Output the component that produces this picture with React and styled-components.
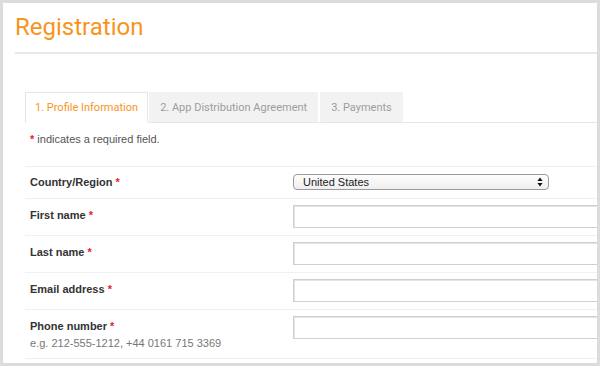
import React from 'react';
import styled, { createGlobalStyle } from 'styled-components';

const Global = createGlobalStyle`
  body {
    margin: 0;
    background: #dcdcdc;
  }
`;

const Frame = styled.div`
  box-sizing: border-box;
  width: 600px;
  height: 366px;
  padding: 3px;
`;

const Panel = styled.div`
  box-sizing: border-box;
  height: 360px;
  background: #ffffff;
  padding: 9px 0 0 12px;
  overflow: hidden;
`;

const Title = styled.h1`
  margin: 0;
  font-family: 'Roboto', sans-serif;
  font-weight: 400;
  font-size: 24px;
  line-height: 30px;
  color: #f7941d;
`;

const Rule = styled.div`
  margin-top: 10px;
  height: 2px;
  background: #e8e8e8;
`;

const Content = styled.div`
  padding-left: 10px;
`;

const TabBar = styled.div`
  display: flex;
  margin-top: 38px;
  border-bottom: 1px solid #e6e6e6;
`;

const Tab = styled.div`
  box-sizing: border-box;
  height: 31px;
  margin-bottom: -1px;
  margin-right: ${p => (p.$active ? '1px' : '2px')};
  padding: 0 ${p => (p.$active ? '9px' : '10px')};
  display: flex;
  align-items: center;
  font-family: 'Roboto', sans-serif;
  font-size: 11px;
  color: ${p => (p.$active ? '#f7941d' : '#9d9d9d')};
  background: ${p => (p.$active ? '#ffffff' : '#f2f2f2')};
  border: 1px solid ${p => (p.$active ? '#e6e6e6' : '#f2f2f2')};
  border-bottom-color: ${p => (p.$active ? '#ffffff' : '#e6e6e6')};
`;

const Note = styled.p`
  margin: 8px 0 19px 5px;
  font-family: 'Liberation Sans', Arial, sans-serif;
  font-size: 11px;
  line-height: 16px;
  color: #555;
`;

const Star = styled.span`
  color: #e8202a;
  font-weight: bold;
`;

const Row = styled.div`
  display: grid;
  grid-template-columns: 263px 1fr;
  padding: ${p => (p.$compact ? '7px 0 8px 5px' : '6px 0 7px 5px')};
  border-top: 1px solid #f0f0f0;
  &:last-child {
    border-bottom: 1px solid #f0f0f0;
    padding-bottom: 7px;
  }
`;

const LabelCell = styled.div`
  font-family: 'Liberation Sans', Arial, sans-serif;
`;

const Label = styled.div`
  font-size: 11px;
  font-weight: bold;
  line-height: ${p => (p.$compact ? '16px' : '20px')};
  color: #333;
`;

const Hint = styled.div`
  font-size: 11px;
  line-height: 15px;
  color: #777;
`;

const Input = styled.div`
  box-sizing: border-box;
  width: 340px;
  height: 23px;
  border: 1px solid #cfcfcf;
  box-shadow: inset 1px 1px 0 #e4e4e4;
  background: #fff;
`;

const Select = styled.div`
  box-sizing: border-box;
  width: 256px;
  height: 16px;
  display: flex;
  align-items: center;
  justify-content: space-between;
  padding: 0 5px 0 9px;
  border: 1px solid #9b9b9b;
  border-radius: 4px;
  background: linear-gradient(#fdfdfd, #efefef);
  font-family: 'Liberation Sans', Arial, sans-serif;
  font-size: 11px;
  color: #222;
`;

const Arrows = () => (
  <svg width="6" height="10" viewBox="0 0 6 10">
    <path d="M3 0.5 L5.6 4 H0.4 Z M3 9.5 L5.6 6 H0.4 Z" fill="#111" />
  </svg>
);

const fields = [
  { label: 'First name' },
  { label: 'Last name' },
  { label: 'Email address' },
  { label: 'Phone number', hint: 'e.g. 212-555-1212, +44 0161 715 3369' },
];

export default function App() {
  return (
    <>
      <Global />
      <Frame>
        <Panel>
          <Title>Registration</Title>
          <Rule />
          <Content>
            <TabBar>
              <Tab $active>1. Profile Information</Tab>
              <Tab>2. App Distribution Agreement</Tab>
              <Tab>3. Payments</Tab>
            </TabBar>
            <Note>
              <Star>*</Star> indicates a required field.
            </Note>
            <Row $compact>
              <LabelCell>
                <Label $compact>
                  Country/Region <Star>*</Star>
                </Label>
              </LabelCell>
              <Select>
                <span>United States</span>
                <Arrows />
              </Select>
            </Row>
            {fields.map(f => (
              <Row key={f.label}>
                <LabelCell>
                  <Label>
                    {f.label} <Star>*</Star>
                  </Label>
                  {f.hint && <Hint>{f.hint}</Hint>}
                </LabelCell>
                <Input />
              </Row>
            ))}
          </Content>
        </Panel>
      </Frame>
    </>
  );
}
